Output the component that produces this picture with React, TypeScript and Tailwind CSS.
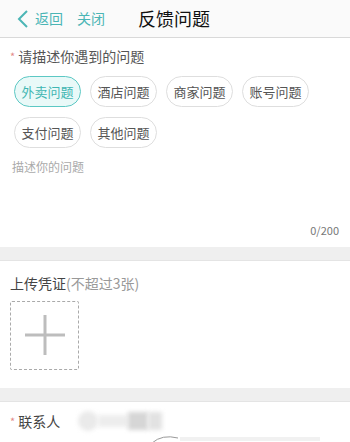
import React from "react";

const chips1 = ["外卖问题", "酒店问题", "商家问题", "账号问题"];
const chips2 = ["支付问题", "其他问题"];

function Chip({ label, active }: { label: string; active?: boolean }) {
  return (
    <div
      className={
        "w-[67px] h-[31px] rounded-full border flex items-center justify-center text-[13px] " +
        (active
          ? "border-[#5cc8c4] bg-[#e9f9f8] text-[#3fb6b2]"
          : "border-[#dedede] bg-white text-[#555]")
      }
    >
      {label}
    </div>
  );
}

export default function App() {
  return (
    <div
      className="w-[350px] h-[442px] overflow-hidden bg-white"
      style={{ fontFamily: '"Noto Sans CJK SC", "Noto Sans", sans-serif' }}
    >
      {/* header */}
      <div className="h-[38px] bg-[#fafafa] border-b border-[#d9d9d9] flex items-center">
        <svg width="14" height="20" viewBox="0 0 14 20" className="ml-[16px]">
          <path d="M11 2 L3 10 L11 18" fill="none" stroke="#4bb5b5" strokeWidth="2" />
        </svg>
        <span className="ml-[5px] text-[14px] text-[#4bb5b5]">返回</span>
        <span className="ml-[14px] text-[14px] text-[#4bb5b5]">关闭</span>
        <span className="ml-[33px] text-[18px] text-[#111]">反馈问题</span>
      </div>

      {/* section 1 */}
      <div className="px-[10px] pt-[7px]">
        <div className="flex items-center text-[14px] text-[#555] h-[22px]">
          <span className="text-[#e48a8a] text-[11px] mr-[3px]">*</span>
          请描述你遇到的问题
        </div>
        <div className="mt-[9px] pl-[4px] flex flex-col gap-[10px]">
          <div className="flex gap-[9px]">
            {chips1.map((c, i) => (
              <Chip key={c} label={c} active={i === 0} />
            ))}
          </div>
          <div className="flex gap-[9px]">
            {chips2.map((c) => (
              <Chip key={c} label={c} />
            ))}
          </div>
        </div>
        <div className="mt-[10px] pl-[2px] text-[12px] text-[#aaa] h-[18px] leading-[18px]">描述你的问题</div>
        <div className="mt-[46px] text-right pr-[1px] text-[11px] text-[#777]">0/200</div>
      </div>

      <div className="mt-[8px] h-[14px] bg-[#efefef] border-b border-[#e4e4e4]" />

      {/* upload */}
      <div className="px-[10px] pt-[12px]">
        <div className="text-[14px] text-[#444] h-[20px] leading-[20px]">
          上传凭证<span className="text-[#999]">(不超过3张)</span>
        </div>
        <div className="mt-[8px] w-[69px] h-[69px] border border-dashed border-[#aaa] rounded-[2px] flex items-center justify-center">
          <svg width="40" height="40" viewBox="0 0 40 40">
            <rect x="18.5" y="0" width="3" height="40" fill="#bdbdbd" />
            <rect x="0" y="18.5" width="40" height="3" fill="#bdbdbd" />
          </svg>
        </div>
      </div>

      <div className="mt-[18px] h-[14px] bg-[#efefef] border-b border-[#e4e4e4]" />

      {/* contact */}
      <div className="px-[10px] pt-[9px] flex items-center">
        <span className="text-[#e48a8a] text-[11px] mr-[3px]">*</span>
        <span className="text-[14px] text-[#444]">联系人</span>
        <div className="ml-[18px] flex items-center">
          <div className="w-[20px] h-[20px] rounded-full bg-[#eaeaea] blur-[2px]" />
          <div className="w-[30px] h-[12px] bg-[#ededed] blur-[2px]" />
          <div className="w-[20px] h-[18px] bg-[#d6d6d6] blur-[2px]" />
          <div className="w-[14px] h-[18px] bg-[#e2e2e2] blur-[2px]" />
        </div>
      </div>
      <div className="mt-[2px] ml-[150px] flex items-center">
        <svg width="30" height="10" viewBox="0 0 30 10">
          <path d="M2 9 Q12 0 28 4" fill="none" stroke="#999" strokeWidth="1" />
        </svg>
        <div className="w-[140px] h-[4px] bg-[#f1f1f1]" />
      </div>
    </div>
  );
}
